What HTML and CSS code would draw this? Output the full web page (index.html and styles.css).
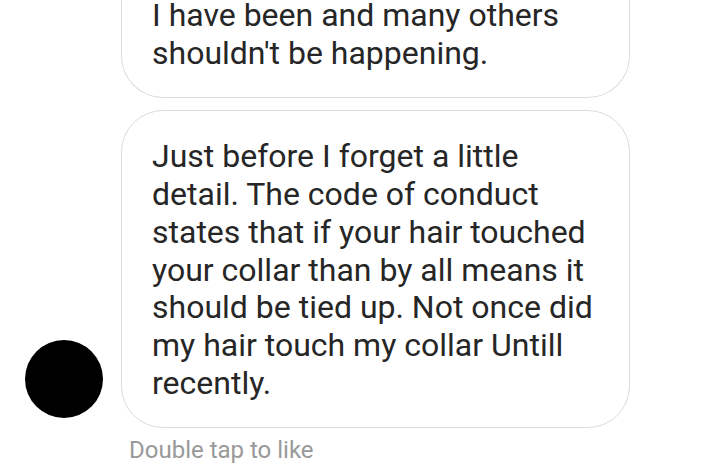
FILE: index.html
```html
<!DOCTYPE html>
<html>
<head>
<meta charset="utf-8">
<link rel="stylesheet" href="styles.css">
</head>
<body>
<div class="thread">
  <div class="row">
    <div class="avatar-space"></div>
    <div class="bubble bubble-cut">I have been and many others shouldn't be happening.</div>
  </div>
  <div class="row row-last">
    <div class="avatar"></div>
    <div class="bubble">Just before I forget a little detail. The code of conduct states that if your hair touched your collar than by all means it should be tied up. Not once did my hair touch my collar Untill recently.</div>
  </div>
  <div class="hint">Double tap to like</div>
</div>
</body>
</html>
```

FILE: styles.css
```css
html, body {
  margin: 0;
  padding: 0;
  background: #ffffff;
}

.thread {
  display: flex;
  flex-direction: column;
  gap: 12px;
  margin-top: -3px;
  padding-left: 25px;
  font-family: Roboto, "Noto Sans", sans-serif;
}

.row {
  display: flex;
  align-items: flex-end;
  gap: 18px;
}

.avatar-space {
  width: 78px;
  flex: none;
}

.avatar {
  width: 78px;
  height: 78px;
  flex: none;
  border-radius: 50%;
  background: #000000;
  margin-bottom: 10px;
}

.bubble {
  box-sizing: border-box;
  width: 509px;
  border: 1.5px solid #dbdbdb;
  border-radius: 42px;
  padding: 27px 32px 25px 30px;
  color: #262626;
  font-size: 32px;
  line-height: 37.7px;
}

.bubble-cut {
  border-top: 0;
  border-top-left-radius: 0;
  border-top-right-radius: 0;
  padding-top: 0;
}

.hint {
  margin-top: -3px;
  padding-left: 104px;
  color: #999999;
  font-size: 24px;
  line-height: 26px;
}
```
